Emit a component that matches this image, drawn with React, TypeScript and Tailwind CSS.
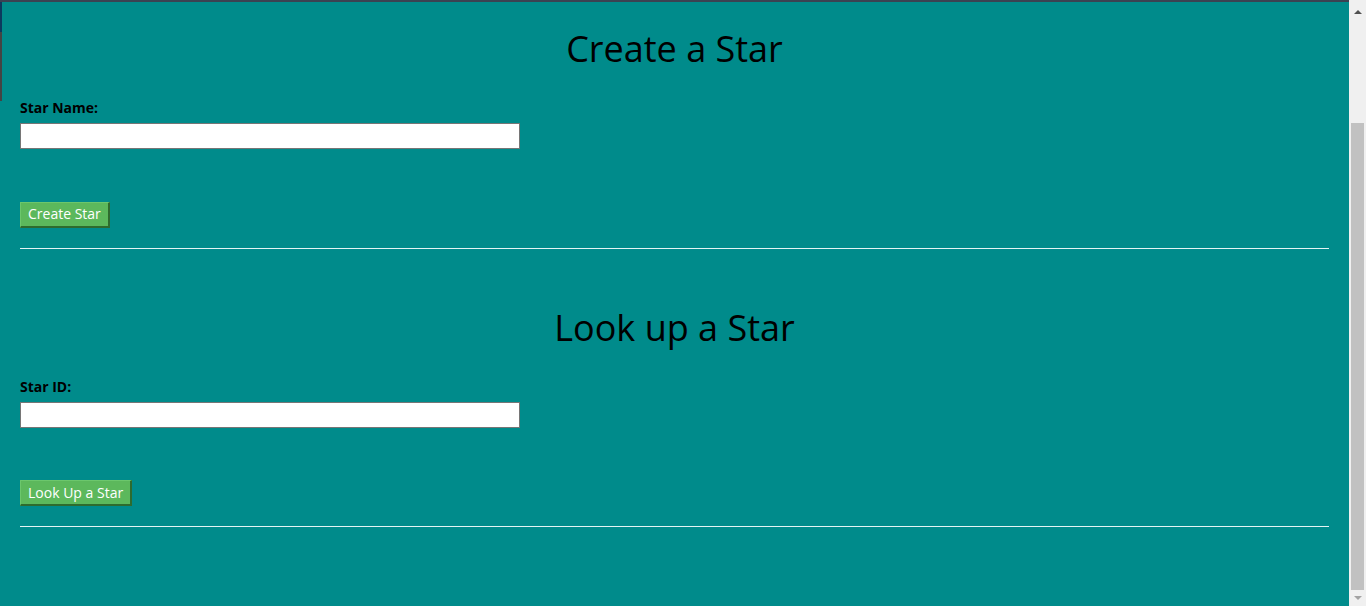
import React from 'react';

interface StarFormProps {
  title: string;
  label: string;
  action: string;
}

const StarForm = ({ title, label, action }: StarFormProps) => (
  <section className="flex flex-col">
    <h1 className="text-center text-[36px] leading-[49px] font-normal text-black">{title}</h1>
    <label className="mt-[25px] text-[14px] leading-[19px] font-bold text-black">{label}</label>
    <input
      type="text"
      className="mt-[6px] w-[500px] h-[26px] bg-white border border-[#767676] outline-none px-1 text-[13px]"
    />
    <div className="mt-[52px]">
      <button
        type="button"
        className="h-[26px] px-[7px] bg-[#5cb85c] text-white text-[14px] leading-none border-t border-l border-t-[#6cc76c] border-l-[#6cc76c] border-r-2 border-b-2 border-r-[#2e6b2e] border-b-[#2e6b2e]"
      >
        {action}
      </button>
    </div>
    <hr className="mt-[20px] border-0 border-t border-[#e3f4f4]" />
  </section>
);

const FakeScrollbar = () => (
  <div className="w-[17px] h-full bg-[#f0f0f0] flex flex-col items-center">
    <div className="h-[23px] flex items-center justify-center">
      <div className="w-0 h-0 border-l-[4px] border-r-[4px] border-b-[4px] border-l-transparent border-r-transparent border-b-[#505050]" />
    </div>
    <div className="mt-[100px] w-[13px] h-[467px] bg-[#c1c1c1]" />
    <div className="flex-1 flex items-center justify-center">
      <div className="w-0 h-0 border-l-[4px] border-r-[4px] border-t-[4px] border-l-transparent border-r-transparent border-t-[#a3a3a3]" />
    </div>
  </div>
);

export default function App() {
  return (
    <div
      className="flex w-full h-[606px] overflow-hidden"
      style={{ fontFamily: '"Open Sans", "Noto Sans", sans-serif' }}
    >
      <main className="relative flex-1 bg-[#008b8b] px-[20px] pt-[24px]">
        <div className="absolute top-0 left-0 right-0 h-[2px] bg-[#3b4252]" />
        <div className="absolute top-[2px] left-0 w-[2px] h-[30px] bg-[#0c3a5e]" />
        <div className="absolute top-[32px] left-0 w-[2px] h-[69px] bg-[#444444]" />
        <StarForm title="Create a Star" label="Star Name:" action="Create Star" />
        <div className="mt-[54px]">
          <StarForm title="Look up a Star" label="Star ID:" action="Look Up a Star" />
        </div>
      </main>
      <FakeScrollbar />
    </div>
  );
}
